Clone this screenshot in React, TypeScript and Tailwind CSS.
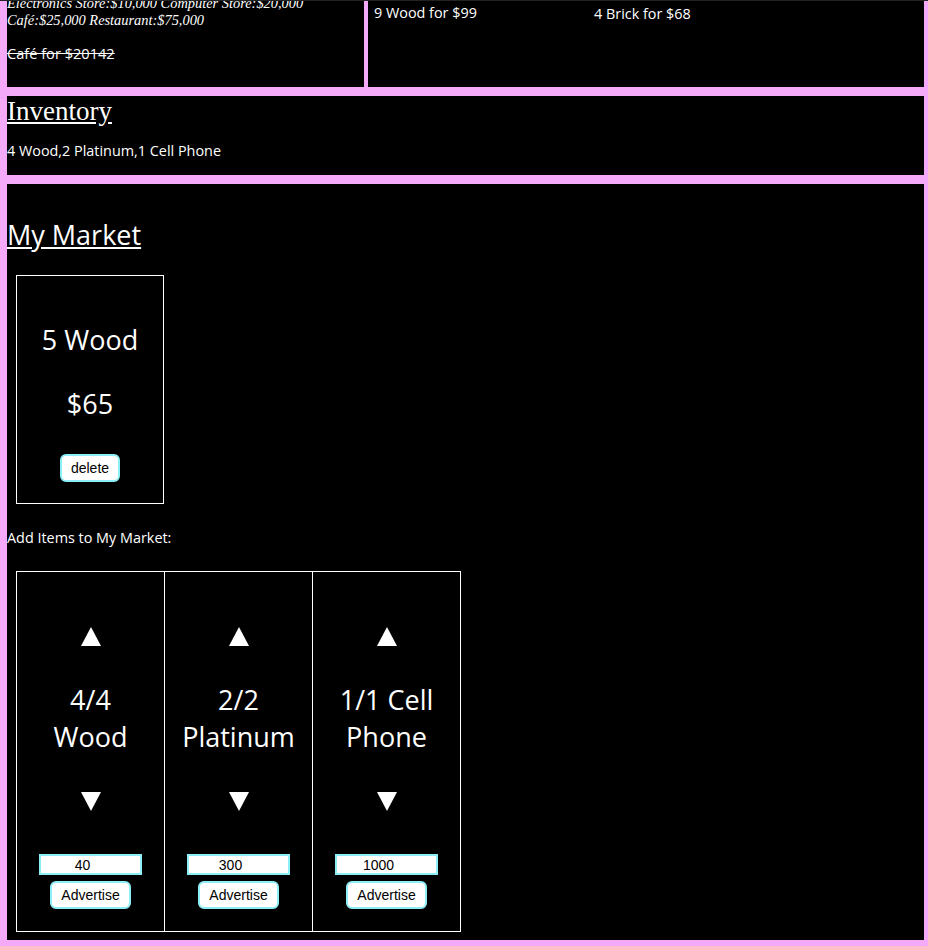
import React from 'react'

const sans = 'font-["Open_Sans",sans-serif]'

interface AddItem {
  label: string
  price: string
}

const addItems: AddItem[] = [
  { label: '4/4 Wood', price: '40' },
  { label: '2/2 Platinum', price: '300' },
  { label: '1/1 Cell Phone', price: '1000' },
]

function Up() {
  return (
    <svg width="20" height="19" viewBox="0 0 20 19" className="mx-auto block">
      <polygon points="10,0 20,19 0,19" fill="#fff" />
    </svg>
  )
}

function Down() {
  return (
    <svg width="20" height="19" viewBox="0 0 20 19" className="mx-auto block">
      <polygon points="0,0 20,0 10,19" fill="#fff" />
    </svg>
  )
}

function Btn({ children }: { children: React.ReactNode }) {
  return (
    <button className='h-[28px] px-[9px] rounded-[6px] border-2 border-[#8eeef5] bg-white text-black text-[14px] leading-none font-["Liberation_Sans",Arial,sans-serif]'>
      {children}
    </button>
  )
}

export default function App() {
  return (
    <div className={`min-h-[946px] bg-[#f4a9f9] text-white ${sans}`}>
      <div className="h-px bg-[#222]" />
      <div className="pl-[7px] pr-[4px] pb-[6px] flex flex-col gap-[9px]">
        {/* shops + offers */}
        <div className="flex gap-[4px] h-[86px]">
          <div className="w-[357px] bg-black overflow-hidden">
            <div className='mt-[-6px] italic text-[14.4px] leading-[17px] font-["Liberation_Serif",serif]'>
              <div>Electronics Store:$10,000 Computer Store:$20,000</div>
              <div>Café:$25,000 Restaurant:$75,000</div>
            </div>
            <p className="mt-[15px] text-[14.6px] leading-[19px] line-through">Café for $20142</p>
          </div>
          <div className="flex-1 bg-black flex">
            <div className="w-[220px] ml-[6px] pt-[2px] text-[14.4px] leading-[19px]">9 Wood for $99</div>
            <div className="w-[220px] pt-[3px] text-[14.4px] leading-[19px]">4 Brick for $68</div>
          </div>
        </div>

        {/* inventory */}
        <div className="h-[79px] bg-black">
          <h2 className='text-[27px] leading-[30px] underline font-["Liberation_Serif",serif]'>Inventory</h2>
          <p className="mt-[15px] text-[14.4px] leading-[19px]">4 Wood,2 Platinum,1 Cell Phone</p>
        </div>

        {/* my market */}
        <div className="h-[756px] bg-black pt-[32px]">
          <h2 className="text-[27px] leading-[37px] underline">My Market</h2>

          <div className="ml-[9px] mt-[22px] w-[148px] border border-white text-center pt-[45px] pb-[21px]">
            <p className="text-[27px] leading-[37px]">5 Wood</p>
            <p className="mt-[27px] text-[27px] leading-[37px]">$65</p>
            <div className="mt-[32px]">
              <Btn>delete</Btn>
            </div>
          </div>

          <p className="mt-[24px] text-[14.4px] leading-[19px]">Add Items to My Market:</p>

          <div className="ml-[9px] mt-[24px] flex">
            {addItems.map((item, i) => (
              <div
                key={item.label}
                className={`${i === addItems.length - 1 ? 'w-[149px] border-r' : 'w-[148px]'} border-l border-t border-b border-white text-center pt-[55px] pb-[22px]`}
              >
                <Up />
                <p className="mt-[35px] px-4 text-[27px] leading-[37px]">{item.label}</p>
                <div className="mt-[37px]">
                  <Down />
                </div>
                <input
                  readOnly
                  value={item.price}
                  className='mt-[43px] block mx-auto w-[103px] h-[21px] border-2 border-[#8eeef5] bg-white text-black text-center pr-4 text-[14px] leading-none font-["Liberation_Sans",Arial,sans-serif] outline-none'
                />
                <div className="mt-[6px]">
                  <Btn>Advertise</Btn>
                </div>
              </div>
            ))}
          </div>
        </div>
      </div>
    </div>
  )
}
